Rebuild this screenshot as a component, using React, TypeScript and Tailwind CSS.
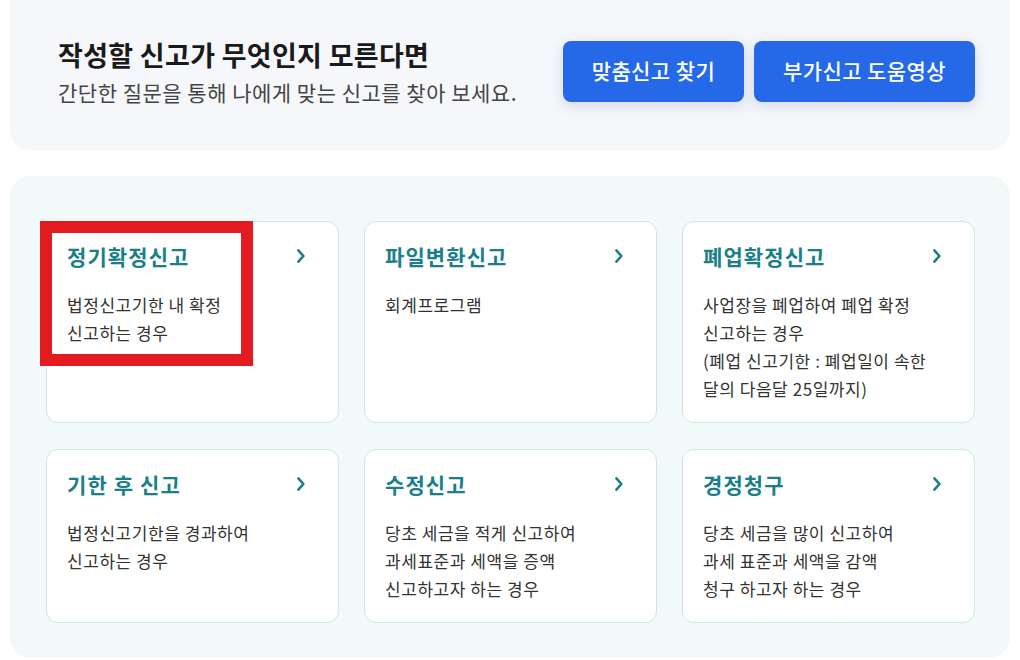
import React from "react";

interface ReportCard {
  title: string;
  lines: string[];
}

const cards: ReportCard[] = [
  { title: "정기확정신고", lines: ["법정신고기한 내 확정", "신고하는 경우"] },
  { title: "파일변환신고", lines: ["회계프로그램"] },
  {
    title: "폐업확정신고",
    lines: ["사업장을 폐업하여 폐업 확정", "신고하는 경우", "(폐업 신고기한 : 폐업일이 속한", "달의 다음달 25일까지)"],
  },
  { title: "기한 후 신고", lines: ["법정신고기한을 경과하여", "신고하는 경우"] },
  { title: "수정신고", lines: ["당초 세금을 적게 신고하여", "과세표준과 세액을 증액", "신고하고자 하는 경우"] },
  { title: "경정청구", lines: ["당초 세금을 많이 신고하여", "과세 표준과 세액을 감액", "청구 하고자 하는 경우"] },
];

function Chevron() {
  return (
    <svg width="10" height="16" viewBox="0 0 10 16" fill="none" className="shrink-0">
      <path d="M2.4 2.4 L7.4 8 L2.4 13.6" stroke="#1a7f88" strokeWidth="2.6" strokeLinecap="round" strokeLinejoin="round" />
    </svg>
  );
}

function Card({ card, highlight }: { card: ReportCard; highlight?: boolean }) {
  return (
    <div className="relative bg-white border border-[#cfe5e7] rounded-[12px] pl-[20px] pr-[32px] pt-[19px] pb-[19px]">
      <div className="flex items-center justify-between">
        <h3 className="text-[21px] leading-[30px] font-bold text-[#1a7f88] tracking-[1.1px]">{card.title}</h3>
        <Chevron />
      </div>
      <div className="mt-[20px] text-[17px] leading-[28px] text-[#333333] tracking-[0.55px]">
        {card.lines.map((line) => (
          <p key={line}>{line}</p>
        ))}
      </div>
      {/* 강조 표시 박스 */}
      {highlight && (
        <div className="absolute left-[-7px] top-[-1px] w-[213px] h-[145px] border-[12px] border-[#e31b20] pointer-events-none" />
      )}
    </div>
  );
}

export default function App() {
  return (
    <div
      className="w-[1020px] h-[660px] bg-white overflow-hidden px-[10px]"
      style={{ fontFamily: '"Noto Sans CJK KR", "Noto Sans", sans-serif' }}
    >
      {/* 상단 안내 영역 */}
      <div className="h-[150px] bg-[#f5f7fb] rounded-b-[20px] pl-[48px] pr-[35px] pt-[36px] flex items-start justify-between">
        <div className="flex items-center justify-between w-full">
          <div>
            <h2 className="text-[27px] leading-[38px] font-bold text-[#1a1a1a] tracking-[0.3px]">작성할 신고가 무엇인지 모른다면</h2>
            <p className="mt-[4px] text-[21px] leading-[28px] text-[#444444] tracking-[0.5px]">
              간단한 질문을 통해 나에게 맞는 신고를 찾아 보세요.
            </p>
          </div>
          <div className="flex gap-[10px]">
            <button className="h-[61px] px-[29px] rounded-[8px] bg-[#2569e8] text-white text-[21px] font-medium tracking-[0.4px] shadow-[0_4px_14px_rgba(60,80,140,0.18)]">
              맞춤신고 찾기
            </button>
            <button className="h-[61px] px-[29px] rounded-[8px] bg-[#2569e8] text-white text-[21px] font-medium tracking-[0.4px] shadow-[0_4px_14px_rgba(60,80,140,0.18)]">
              부가신고 도움영상
            </button>
          </div>
        </div>
      </div>

      {/* 신고 유형 카드 */}
      <div className="mt-[26px] bg-[#f1f9f9] rounded-[20px] pl-[36px] pr-[35px] pt-[45px] pb-[35px]">
        <div className="grid grid-cols-3 gap-x-[25px] gap-y-[26px]">
          {cards.map((card, i) => (
            <Card key={card.title} card={card} highlight={i === 0} />
          ))}
        </div>
      </div>
    </div>
  );
}
